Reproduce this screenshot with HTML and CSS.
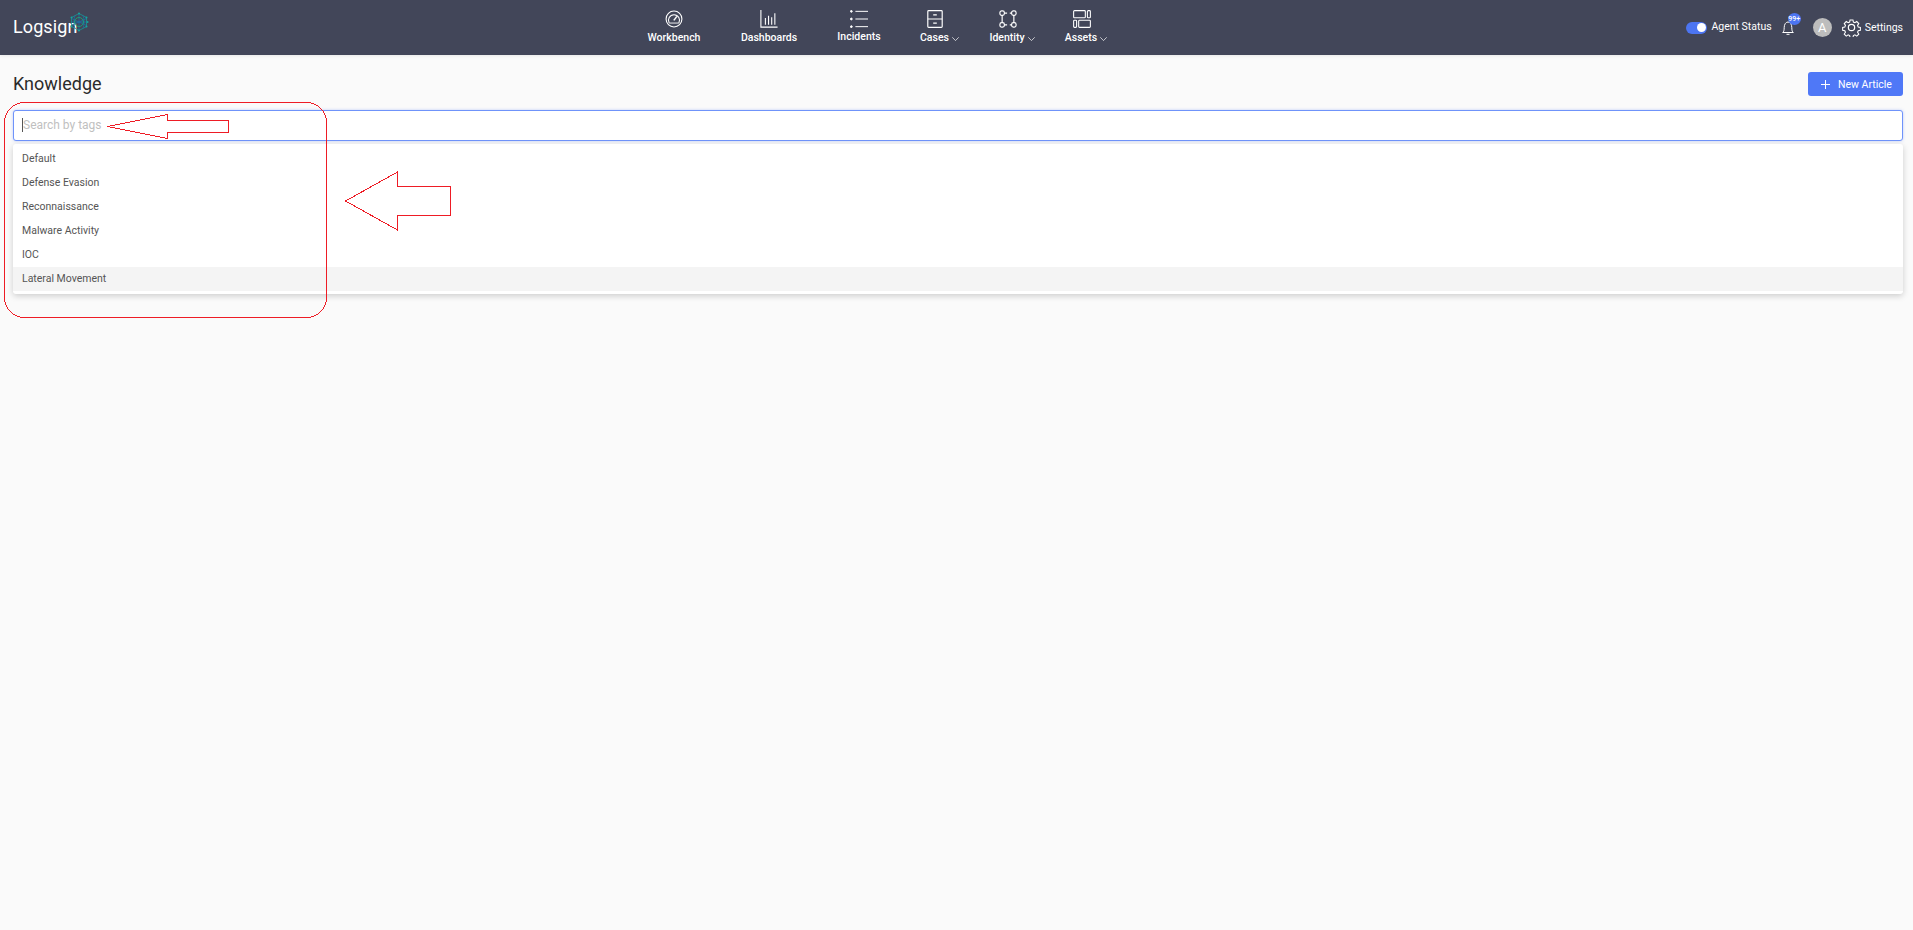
FILE: index.html
```html
<!DOCTYPE html>
<html lang="en">
<head>
<meta charset="utf-8">
<title>Knowledge</title>
<link rel="stylesheet" href="styles.css">
</head>
<body>
<header class="topbar">
  <a class="logo">
    <span class="logo-text">Logsign</span>
    <svg class="logo-mark" viewBox="0 0 20 20" fill="none" stroke-width=".8">
      <path d="M10 1.500l7.500 4v9L10 18.500l-7.500-4v-9z" stroke="#159a94"/>
      <path d="M2.500 10h15M10 1.500v17M6 3.500c-1.500 4-1.500 9 0 13M14 3.500c1.500 4 1.500 9 0 13M2.500 6.500l15 7M17.500 6.500l-15 7" stroke="#1c6fa6"/>
      <circle cx="10" cy="10" r="4.500" stroke="#18b07a"/>
      <g fill="#13a8a0" stroke="none"><circle cx="10" cy="1.500" r="1"/><circle cx="17.500" cy="5.500" r="1"/><circle cx="17.500" cy="14.500" r="1"/><circle cx="10" cy="18.500" r="1"/><circle cx="2.500" cy="14.500" r="1"/><circle cx="2.500" cy="5.500" r="1"/><circle cx="18.500" cy="10" r="1"/></g>
    </svg>
  </a>
  <nav class="nav">
    <a class="nav-item w-workbench">
      <svg class="ico" viewBox="0 0 20 20" fill="none" stroke="#fff" stroke-width="1.200"><circle cx="10" cy="10" r="8.800"/><path d="M4.600 14.500a6.200 6.200 0 1 1 10.800 0"/><path d="M4.600 14.500h10.800" stroke-width="1"/><path d="M9.800 11.500l3.400-4.400" stroke-width="1.700"/></svg>
      <span class="nav-label">Workbench</span>
    </a>
    <a class="nav-item w-dash">
      <svg class="ico" viewBox="0 0 20 20" fill="none" stroke="#fff" stroke-width="1.200"><path d="M1 0v19h18.500M6 16.500V9M9.500 16.500V6.500M13 16.500V8M16.500 16.500V3.500"/></svg>
      <span class="nav-label">Dashboards</span>
    </a>
    <a class="nav-item w-inc">
      <svg class="ico" viewBox="0 0 20 20" fill="#fff" stroke="#fff" stroke-width="1.100"><path d="M6 1.500h14M6 10h14M6 18.500h14" fill="none"/><circle cx="1.500" cy="1.500" r="1"/><circle cx="1.500" cy="10" r="1"/><circle cx="1.500" cy="18.500" r="1"/></svg>
      <span class="nav-label">Incidents</span>
    </a>
    <a class="nav-item w-cases has-menu">
      <svg class="ico" viewBox="0 0 20 20" fill="none" stroke="#fff" stroke-width="1.300"><rect x="2" y=".7" width="16" height="18.600" rx="1"/><path d="M2 10h16M8 5.500h4M8 14.500h4"/></svg>
      <span class="nav-label">Cases<svg class="chev" viewBox="0 0 7 4" fill="none" stroke="#fff" stroke-width=".7"><path d="M.3.300L3.500 3.600 6.700.300"/></svg></span>
    </a>
    <a class="nav-item w-ident has-menu">
      <svg class="ico" viewBox="0 0 20 20" fill="none" stroke="#fff" stroke-width="1.300"><rect x="1" y="1" width="5" height="5" rx="2"/><rect x="14" y="1" width="5" height="5" rx="2"/><rect x="1" y="14" width="5" height="5" rx="2"/><rect x="14" y="14" width="5" height="5" rx="2"/><path d="M6 3.500h3M12 3.500h2M16.500 6v8M3.500 6v8M6 16.500h3M12 16.500h2"/></svg>
      <span class="nav-label">Identity<svg class="chev" viewBox="0 0 7 4" fill="none" stroke="#fff" stroke-width=".7"><path d="M.3.300L3.500 3.600 6.700.300"/></svg></span>
    </a>
    <a class="nav-item w-assets has-menu">
      <svg class="ico" viewBox="0 0 20 20" fill="none" stroke="#fff" stroke-width="1.200"><rect x=".7" y=".7" width="13" height="8" rx="1"/><rect x="16" y=".7" width="3.300" height="8" rx="1"/><rect x=".7" y="11.300" width="3.300" height="8" rx="1"/><rect x="6.300" y="11.300" width="13" height="8" rx="1"/></svg>
      <span class="nav-label">Assets<svg class="chev" viewBox="0 0 7 4" fill="none" stroke="#fff" stroke-width=".7"><path d="M.3.300L3.500 3.600 6.700.300"/></svg></span>
    </a>
  </nav>
  <div class="tools">
    <span class="toggle"><span class="knob"></span></span>
    <span class="agent">Agent Status</span>
    <span class="bell">
      <svg viewBox="0 0 12 15" fill="none" stroke="#fff" stroke-width="1"><path d="M.7 12.500c1.100-.8 1.500-2.300 1.500-5C2.200 4.500 3.700 2 6 2s3.800 2.500 3.800 5.500c0 2.700.4 4.200 1.500 5z"/><path d="M4.500 14.300h3"/></svg>
      <span class="badge">99+</span>
    </span>
    <span class="avatar">A</span>
    <svg class="gear" viewBox="0 0 24 24" fill="none" stroke="#fff" stroke-width="1.500"><circle cx="12" cy="12" r="4"/><path d="M10 1.500h4l.6 3 2.100.9 2.600-1.700 2.800 2.800-1.700 2.600.9 2.100 3 .6v4l-3 .6-.9 2.100 1.700 2.600-2.800 2.800-2.600-1.700-2.100.9-.6 3h-4l-.6-3-2.100-.9-2.600 1.700-2.800-2.800 1.700-2.600-.9-2.100-3-.6v-4l3-.6.9-2.100-1.700-2.600 2.800-2.800 2.600 1.700 2.100-.9z" transform="translate(1.100 1.100) scale(.91)"/></svg>
    <span class="settings">Settings</span>
  </div>
</header>
<main class="page">
  <div class="title-row">
    <h1 class="title">Knowledge</h1>
    <button class="new-btn"><svg class="plus" viewBox="0 0 9 9" stroke="#fff" stroke-width="1"><path d="M4.500 0v9M0 4.500h9"/></svg>New Article</button>
  </div>
  <div class="search">
    <span class="caret"></span><span class="placeholder">Search by tags</span>
  </div>
  <ul class="dropdown">
    <li class="opt">Default</li>
    <li class="opt">Defense Evasion</li>
    <li class="opt">Reconnaissance</li>
    <li class="opt">Malware Activity</li>
    <li class="opt">IOC</li>
    <li class="opt active">Lateral Movement</li>
  </ul>
</main>
<svg class="marks" viewBox="0 0 1913 930" fill="none" stroke="#ee1c25" stroke-width="1" shape-rendering="crispEdges">
  <rect x="4.500" y="102.500" width="322" height="215" rx="20"/>
  <path d="M107.500 126.500L167.500 114.500V120.500H228.500V132.500H167.500V138.500Z"/>
  <path d="M345.500 201L397.500 172V186.500H450.500V215.500H397.500V230Z"/>
</svg>
</body>
</html>
```
FILE: styles.css
```css
* { box-sizing: border-box; }
html, body { height: 100%; }
body {
  margin: 0;
  background: #fafafa;
  font-family: Roboto, "Liberation Sans", sans-serif;
  color: #333;
  overflow: hidden;
  position: relative;
}
.topbar {
  height: 55px;
  background: #424659;
  display: flex;
  align-items: flex-start;
  box-shadow: 0 1px 3px rgba(0,0,0,.08);
}
.logo {
  width: 629px;
  padding: 15px 0 0 13px;
  display: flex;
  align-items: flex-start;
  flex: none;
}
.logo-text {
  color: #fff;
  font-size: 18px;
  line-height: 23px;
  font-weight: 400;
  letter-spacing: .1px;
}
.logo-mark { width: 20px; height: 20px; margin: -3px 0 0 -8px; }
.nav { display: flex; flex: none; }
.nav-item {
  display: flex;
  flex-direction: column;
  align-items: center;
  color: #fff;
  padding-top: 10px;
}
.ico { width: 18px; height: 18px; display: block; }
.has-menu .ico { margin-right: 9px; }
.nav-label {
  font-size: 10.500px;
  font-weight: 500;
  line-height: 14px;
  margin-top: 3px;
  white-space: nowrap;
}
.chev { width: 7px; height: 4px; margin-left: 3px; vertical-align: 0; }
.w-workbench { width: 90px; }
.w-inc .nav-label { margin-top: 2px; }
.w-dash { width: 100px; }
.w-inc { width: 80px; }
.w-cases { width: 81px; }
.w-ident { width: 64px; }
.w-assets { width: 84px; }
.tools {
  margin-left: auto;
  display: flex;
  align-items: center;
  height: 55px;
  padding-right: 10px;
  color: #fff;
}
.toggle {
  width: 21px;
  height: 12px;
  background: #4c75f2;
  border-radius: 6px;
  position: relative;
  margin-right: 4px;
}
.knob {
  position: absolute;
  right: 1px;
  top: 1.500px;
  width: 9px;
  height: 9px;
  background: #fff;
  border-radius: 50%;
}
.agent { font-size: 10.500px; margin-right: 10px; position: relative; top: -1px; }
.bell { width: 12px; height: 15px; position: relative; margin-right: 19px; display: block; }
.bell svg { width: 12px; height: 15px; display: block; }
.badge {
  position: absolute;
  left: 6px;
  top: -7px;
  width: 13px;
  height: 12px;
  background: #4c75f2;
  border-radius: 50%;
  font-size: 7px;
  line-height: 12px;
  text-align: center;
  font-weight: 500;
}
.avatar {
  width: 19px;
  height: 19px;
  border-radius: 50%;
  background: #bdbdbd;
  font-size: 13px;
  line-height: 19px;
  text-align: center;
  margin-right: 10px;
}
.gear { width: 19px; height: 19px; margin-right: 4px; }
.settings { font-size: 10.500px; }
.page { padding: 0 10px 0 13px; }
.title-row {
  display: flex;
  justify-content: space-between;
  align-items: flex-start;
  height: 55px;
  padding-top: 17px;
}
.title {
  margin: 0;
  font-size: 18px;
  line-height: 24px;
  font-weight: 400;
  color: #2b2b2b;
}
.new-btn {
  width: 95px;
  height: 24px;
  border: 0;
  border-radius: 3px;
  background: #4f78f7;
  color: #fff;
  font: 400 10.500px Roboto, sans-serif;
  display: flex;
  align-items: center;
  padding: 0 0 0 13px;
}
.plus { width: 9px; height: 9px; margin-right: 8px; }
.search {
  height: 31px;
  background: #fff;
  border: 1px solid #6f93fa;
  border-radius: 3px;
  box-shadow: 0 0 3px rgba(79,120,247,.35);
  display: flex;
  align-items: center;
  padding: 0 0 1px 8px;
}
.caret { width: 1px; height: 14px; background: #555; }
.placeholder { font-size: 12px; color: #bfbfbf; }
.dropdown {
  list-style: none;
  margin: 3px 0 0;
  padding: 3px 0 3px;
  background: #fff;
  border-radius: 3px;
  box-shadow: 0 2px 6px rgba(0,0,0,.18);
}
.opt {
  height: 24px;
  line-height: 23px;
  font-size: 10.500px;
  padding-left: 9px;
  color: #555;
}
.active { background: #f4f4f4; }
.marks {
  position: absolute;
  left: 0;
  top: 0;
  width: 1913px;
  height: 930px;
  pointer-events: none;
}
```
